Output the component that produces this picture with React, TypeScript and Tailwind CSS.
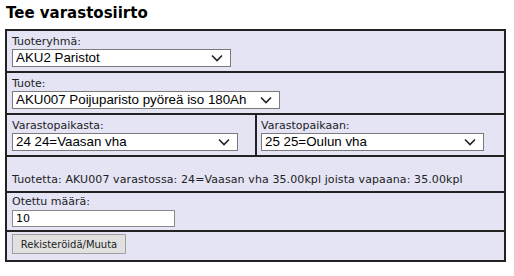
import React from "react";

const verdana = { fontFamily: '"DejaVu Sans", Verdana, sans-serif' };

function Chevron() {
  return (
    <svg width="12" height="8" viewBox="0 0 12 8" className="shrink-0">
      <path d="M1 1.5 L6 6.5 L11 1.5" fill="none" stroke="#222" strokeWidth="1.6" />
    </svg>
  );
}

function Select({ value, width }: { value: string; width: string }) {
  return (
    <div
      className={`flex items-center justify-between h-[18px] bg-white border border-[#7a7a7a] pl-[3px] pr-[7px] ${width}`}
    >
      <span className="text-[13.33px] leading-none text-black font-['Liberation_Sans',Arial,sans-serif] whitespace-nowrap">
        {value}
      </span>
      <Chevron />
    </div>
  );
}

function Label({ children }: { children: React.ReactNode }) {
  return (
    <div className="text-[11px] leading-[14px] text-[#222]" style={verdana}>
      {children}
    </div>
  );
}

export default function App() {
  return (
    <div className="w-[514px] h-[276px] bg-white overflow-hidden">
      <h1
        className="pl-[6px] pt-[3px] text-[15px] leading-[20px] font-bold text-black"
        style={verdana}
      >
        Tee varastosiirto
      </h1>
      <div className="ml-[5px] mt-[6px] w-[501px] border-2 border-[#222] bg-[#e4e4f5]">
        <div className="border-b-2 border-[#222] px-[5px] pt-[4px] pb-[4px]">
          <Label>Tuoteryhmä:</Label>
          <Select value="AKU2 Paristot" width="w-[219px]" />
        </div>
        <div className="border-b-2 border-[#222] px-[5px] pt-[4px] pb-[4px]">
          <Label>Tuote:</Label>
          <Select value="AKU007 Poijuparisto pyöreä iso 180Ah" width="w-[268px]" />
        </div>
        <div className="flex border-b-2 border-[#222]">
          <div className="w-[250px] border-r-2 border-[#222] px-[5px] pt-[4px] pb-[4px]">
            <Label>Varastopaikasta:</Label>
            <Select value="24 24=Vaasan vha" width="w-[226px]" />
          </div>
          <div className="flex-1 px-[4px] pt-[4px] pb-[4px]">
            <Label>Varastopaikaan:</Label>
            <Select value="25 25=Oulun vha" width="w-[223px]" />
          </div>
        </div>
        <div
          className="border-b-2 border-[#222] px-[5px] pt-[16px] pb-[5px] text-[11px] leading-[13px] tracking-[0.1px] text-[#222]"
          style={verdana}
        >
          Tuotetta: AKU007 varastossa: 24=Vaasan vha 35.00kpl joista vapaana: 35.00kpl
        </div>
        <div className="border-b-2 border-[#222] px-[5px] pt-[2px] pb-[3px]">
          <Label>Otettu määrä:</Label>
          <div
            className="mt-[1px] w-[163px] h-[17px] bg-white border border-[#8a8a8a] pl-[3px] text-[11px] leading-[15px] text-black"
            style={verdana}
          >
            10
          </div>
        </div>
        <div className="px-[5px] pt-[2px] pb-[2px]">
          <div
            className="inline-flex items-center justify-center w-[114px] h-[20px] bg-[#e1e1e1] border border-[#a0a0a0] text-[10px] text-[#222] align-top"
            style={verdana}
          >
            Rekisteröidä/Muuta
          </div>
        </div>
      </div>
    </div>
  );
}
